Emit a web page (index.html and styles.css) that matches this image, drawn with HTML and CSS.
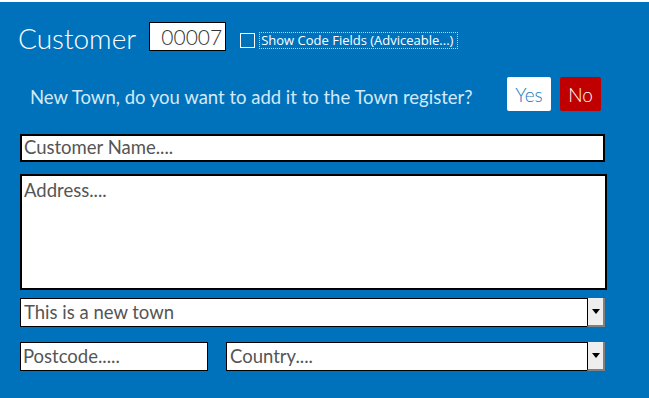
FILE: index.html
```html
<!DOCTYPE html>
<html lang="en">
<head>
    <meta charset="UTF-8">
    <title>Customer</title>
    <link rel="stylesheet" href="styles.css">
</head>
<body>
    <div class="form">
        <!-- Header -->
        <div class="header">
            <div class="title">Customer</div>
            <div class="code-box">00007</div>
            <div class="show-codes">
                <span class="check"></span>
                <span class="check-label">Show Code Fields (Adviceable...)</span>
            </div>
        </div>

        <!-- New town prompt -->
        <div class="prompt">
            <div class="prompt-text">New Town, do you want to add it to the Town register?</div>
            <div class="prompt-buttons">
                <button class="btn btn-yes">Yes</button>
                <button class="btn btn-no">No</button>
            </div>
        </div>

        <!-- Fields -->
        <div class="fields">
            <div class="field field-name">Customer Name....</div>
            <div class="field field-address">Address....</div>
            <div class="field combo field-town">
                <span class="combo-text">This is a new town</span>
                <span class="combo-btn"><span class="arrow"></span></span>
            </div>
            <div class="row">
                <div class="field field-postcode">Postcode.....</div>
                <div class="field combo field-country">
                    <span class="combo-text">Country....</span>
                    <span class="combo-btn"><span class="arrow"></span></span>
                </div>
            </div>
        </div>
    </div>
</body>
</html>
```

FILE: styles.css
```css
html, body {
    margin: 0;
    padding: 0;
    background: white;
}

body {
    font-family: 'Lato', 'Open Sans', sans-serif;
}

.form {
    margin-top: 2px;
    height: 396px;
    background: #0072bc;
    overflow: hidden;
}

/* header */
.header {
    display: flex;
    align-items: center;
    height: 29px;
    padding: 20px 0 0 18px;
}

.title {
    color: white;
    font-size: 28px;
    font-weight: 300;
    line-height: 29px;
    margin-top: 3px;
}

.code-box {
    box-sizing: border-box;
    width: 77px;
    height: 29px;
    margin-left: 13px;
    background: white;
    border: 1px solid black;
    color: #333;
    font-size: 21px;
    font-weight: 300;
    line-height: 27px;
    text-align: right;
    padding-right: 3px;
}

.show-codes {
    display: flex;
    align-items: center;
    margin-left: 14px;
    margin-top: 7px;
}

.check {
    box-sizing: border-box;
    width: 15px;
    height: 15px;
    border: 1px solid white;
}

.check-label {
    box-sizing: border-box;
    margin-left: 4px;
    width: 199px;
    height: 17px;
    border: 1px dotted #e8c9a0;
    color: white;
    font-family: 'Open Sans', sans-serif;
    font-size: 13px;
    line-height: 15px;
    padding-left: 1px;
    white-space: nowrap;
}

/* prompt */
.prompt {
    display: flex;
    align-items: center;
    justify-content: space-between;
    margin-top: 26px;
    padding: 0 48px 0 30px;
}

.prompt-text {
    color: #d3e9f8;
    font-size: 18.5px;
    margin-top: 6px;
}

.prompt-buttons {
    display: flex;
    gap: 9px;
}

.btn {
    height: 34px;
    padding: 0;
    border: none;
    border-radius: 2px;
    font-family: 'Lato', 'Open Sans', sans-serif;
    font-size: 19px;
    font-weight: 300;
}

.btn-yes {
    width: 44px;
    background: white;
    color: #1a78c2;
}

.btn-no {
    width: 41px;
    background: #c00000;
    color: white;
}

/* fields */
.fields {
    margin-top: 23px;
    padding-left: 20px;
}

.field {
    box-sizing: border-box;
    background: white;
    border: 2px solid black;
    color: #555;
    font-size: 18.5px;
    padding-left: 2px;
    white-space: nowrap;
}

.field-name {
    width: 585px;
    height: 28px;
    line-height: 23px;
}

.field-address {
    width: 587px;
    height: 116px;
    margin-top: 12px;
    line-height: 28px;
}

.combo {
    display: flex;
    border-width: 1px;
    padding-left: 3px;
}

.combo-text {
    flex: 1;
    line-height: 27px;
}

.combo-btn {
    box-sizing: border-box;
    width: 18px;
    display: flex;
    align-items: center;
    justify-content: center;
    background: #eeeeee;
    border-left: 1px solid black;
    border-right: 2px solid #808080;
    border-bottom: 2px solid #808080;
    margin: -1px -1px -1px 0;
}

.arrow {
    width: 0;
    height: 0;
    border-left: 4px solid transparent;
    border-right: 4px solid transparent;
    border-top: 5px solid black;
}

.field-town {
    width: 585px;
    height: 29px;
    margin-top: 8px;
}

.row {
    display: flex;
    margin-top: 15px;
}

.field-postcode {
    width: 188px;
    height: 29px;
    border-width: 1px;
    line-height: 27px;
}

.field-country {
    width: 379px;
    height: 29px;
    margin-left: 18px;
}
```
